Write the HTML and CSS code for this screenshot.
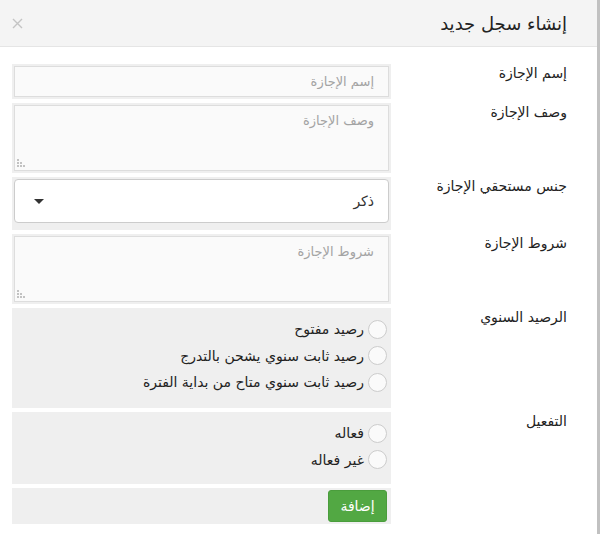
FILE: index.html
```html
<!DOCTYPE html>
<html lang="ar" dir="rtl">
<head>
<meta charset="utf-8">
<title>إنشاء سجل جديد</title>
<link rel="stylesheet" href="styles.css">
</head>
<body>
<div class="page">
  <div class="main">
    <header class="header">
      <h1 class="title">إنشاء سجل جديد</h1>
      <span class="close">
        <svg width="11" height="11" viewBox="0 0 11 11"><path d="M1 1L10 10M10 1L1 10" stroke="#c4c4c4" stroke-width="1.4" fill="none"/></svg>
      </span>
    </header>
    <form class="form">
      <div class="row">
        <label class="label">إسم الإجازة</label>
        <div class="field"><input class="input" type="text" placeholder="إسم الإجازة"></div>
      </div>
      <div class="row">
        <label class="label">وصف الإجازة</label>
        <div class="field"><div class="ta-wrap"><textarea class="textarea" placeholder="وصف الإجازة"></textarea><span class="grip"></span></div></div>
      </div>
      <div class="row">
        <label class="label">جنس مستحقي الإجازة</label>
        <div class="field field-select"><div class="select"><span>ذكر</span><span class="caret"></span></div></div>
      </div>
      <div class="row">
        <label class="label">شروط الإجازة</label>
        <div class="field"><div class="ta-wrap"><textarea class="textarea" placeholder="شروط الإجازة"></textarea><span class="grip"></span></div></div>
      </div>
      <div class="row">
        <label class="label">الرصيد السنوي</label>
        <div class="field field-radios radios-3">
          <div class="radio"><span class="circle"></span><span>رصيد مفتوح</span></div>
          <div class="radio"><span class="circle"></span><span>رصيد ثابت سنوي يشحن بالتدرج</span></div>
          <div class="radio"><span class="circle"></span><span>رصيد ثابت سنوي متاح من بداية الفترة</span></div>
        </div>
      </div>
      <div class="row">
        <label class="label">التفعيل</label>
        <div class="field field-radios radios-2">
          <div class="radio"><span class="circle"></span><span>فعاله</span></div>
          <div class="radio"><span class="circle"></span><span>غير فعاله</span></div>
        </div>
      </div>
      <div class="row">
        <span class="label"></span>
        <div class="field field-btn"><button type="button" class="btn">إضافة</button></div>
      </div>
    </form>
  </div>
  <div class="scroll"></div>
</div>
</body>
</html>
```
FILE: styles.css
```css
* { box-sizing: border-box; }
html, body { margin: 0; padding: 0; }
body {
  font-family: "DejaVu Sans", sans-serif;
  font-size: 14px;
  color: #333;
  background: #fff;
}
.page { display: flex; direction: ltr; height: 534px; }
.main { flex: 1; direction: rtl; }
.scroll { width: 3px; background: #c1c1c1; }
.header {
  height: 47px;
  background: #f4f4f4;
  border-bottom: 1px solid #e5e5e5;
  display: flex;
  align-items: center;
  justify-content: space-between;
  padding: 0 30px 0 12px;
}
.title { margin: 0; font-size: 18px; font-weight: normal; color: #222; }
.close { display: flex; }
.form { padding: 17px 30px 0 12px; display: flex; flex-direction: column; gap: 4px; }
.row { display: flex; }
.label { flex: 1; line-height: 18px; color: #222; }
.field { width: 379px; background: #efefef; padding: 2px; }
.input {
  display: block; width: 100%; height: 31px;
  border: 1px solid #ddd; background: #fafafa;
  padding: 0 14px; font: inherit; font-size: 13px; color: #333; outline: none;
}
.input::placeholder, .textarea::placeholder { color: #a3a3a3; }
.ta-wrap { position: relative; }
.textarea {
  display: block; width: 100%; height: 66px;
  border: 1px solid #ddd; background: #fafafa;
  padding: 7px 14px; font: inherit; font-size: 13px; resize: none; outline: none;
}
.grip {
  position: absolute; left: 3px; bottom: 3px; width: 9px; height: 9px;
  background: linear-gradient(#c2c2c2, #c2c2c2);
  -webkit-mask:
    linear-gradient(to right, #000 2px, transparent 2px) 0 0 / 3px 3px,
    linear-gradient(#000 2px, transparent 2px) 0 0 / 3px 3px;
  -webkit-mask-composite: source-in;
  mask-composite: intersect;
  clip-path: polygon(0 0, 3px 0, 3px 3px, 6px 3px, 6px 6px, 9px 6px, 9px 9px, 0 9px);
}
.field-select { padding-bottom: 7px; }
.select {
  height: 44px; background: #fff; border: 1px solid #ccc; border-radius: 4px;
  display: flex; align-items: center; justify-content: space-between;
  padding: 0 14px 0 19px;
}
.caret {
  width: 0; height: 0;
  border-left: 5px solid transparent; border-right: 5px solid transparent;
  border-top: 5px solid #333;
}
.field-radios { padding: 8px 4px 0 0; }
.radios-3 { height: 100px; }
.radios-2 { height: 72px; }
.radio { display: flex; align-items: center; height: 26.5px; gap: 4px; color: #222; }
.circle {
  width: 19px; height: 19px; border-radius: 50%;
  border: 1px solid #ccc; background: #fafafa; flex: none;
}
.field-btn { padding: 2px 4px; }
.btn {
  display: block; height: 32px; width: 59px;
  background: #52a843; color: #fff; border: 1px solid #4a9d3c; border-radius: 3px;
  font: inherit; font-size: 14px; padding: 0;
}
```
